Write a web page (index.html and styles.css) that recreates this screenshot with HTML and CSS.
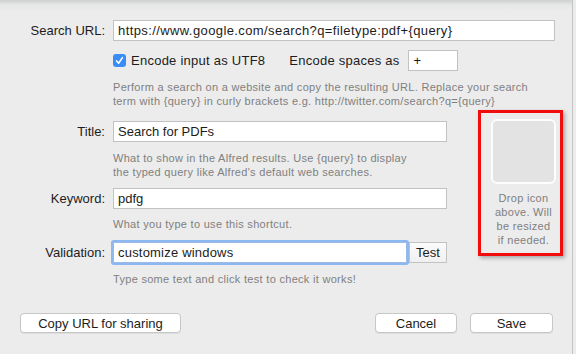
FILE: index.html
```html
<!DOCTYPE html>
<html lang="en">
<head>
    <meta charset="UTF-8">
    <meta name="viewport" content="width=device-width, initial-scale=1.0">
    <title>Custom Search</title>
    <link rel="stylesheet" href="styles.css">
</head>
<body>
    <div class="window">
        <div class="row url-row">
            <label class="label">Search URL:</label>
            <div class="field url-field">https://www.google.com/search?q=filetype:pdf+{query}</div>
        </div>
        <div class="row options-row">
            <span class="check">
                <svg width="13" height="13" viewBox="0 0 13 13"><rect width="13" height="13" rx="3" fill="#3a8df4"/><path d="M3.6 6.9 L5.6 9.2 L9.4 3.6" fill="none" stroke="#fff" stroke-width="1.6" stroke-linecap="round" stroke-linejoin="round"/></svg>
            </span>
            <span class="check-label">Encode input as UTF8</span>
            <span class="spaces-label">Encode spaces as</span>
            <div class="field spaces-field">+</div>
        </div>
        <p class="help top-help">Perform a search on a website and copy the resulting URL. Replace your search<br>term with {query} in curly brackets e.g. http://twitter.com/search?q={query}</p>

        <div class="middle">
            <div class="fields">
                <div class="row">
                    <label class="label">Title:</label>
                    <div class="field wide">Search for PDFs</div>
                </div>
                <p class="help title-help">What to show in the Alfred results. Use {query} to display<br>the typed query like Alfred's default web searches.</p>
                <div class="row">
                    <label class="label">Keyword:</label>
                    <div class="field wide">pdfg</div>
                </div>
                <p class="help keyword-help">What you type to use this shortcut.</p>
                <div class="row">
                    <label class="label">Validation:</label>
                    <div class="field focused">customize windows</div>
                    <button class="test-button">Test</button>
                </div>
                <p class="help">Type some text and click test to check it works!</p>
            </div>
            <div class="icon-box">
                <div class="icon-well"></div>
                <p class="icon-text">Drop icon<br>above. Will<br>be resized<br>if needed.</p>
            </div>
        </div>

        <div class="footer">
            <button class="button share">Copy URL for sharing</button>
            <div class="footer-right">
                <button class="button cancel">Cancel</button>
                <button class="button save">Save</button>
            </div>
        </div>
    </div>
</body>
</html>
```

FILE: styles.css
```css
body {
    margin: 0;
    font-family: "Liberation Sans", Arial, sans-serif;
    font-size: 13px;
    color: #1c1c1c;
    background-color: #ececec;
}

.window {
    width: 573px;
    height: 354px;
    box-sizing: border-box;
    padding-top: 20px;
    border-right: 1px solid #c4c4c4;
    background: linear-gradient(#cfcfcf, #e6e8e8 5px, #ececec 12px);
    overflow: hidden;
}

.row {
    display: flex;
    align-items: center;
    height: 21px;
}

.label {
    width: 105px;
    text-align: right;
    margin-right: 8px;
    flex-shrink: 0;
}

.field {
    height: 21px;
    box-sizing: border-box;
    border: 1px solid #c2c2c2;
    background-color: #fff;
    padding: 0 4px;
    line-height: 19px;
    white-space: nowrap;
}

.url-field {
    width: 442px;
    letter-spacing: 0.4px;
}

.options-row {
    margin-top: 9px;
    padding-left: 113px;
    letter-spacing: 0.25px;
}

.check {
    width: 13px;
    height: 13px;
    display: flex;
}

.check-label {
    margin-left: 5px;
}

.spaces-label {
    margin-left: 24px;
}

.spaces-field {
    width: 50px;
    margin-left: 8px;
    padding-left: 5px;
}

.help {
    margin: 9px 0 0 113px;
    font-size: 11px;
    line-height: 14px;
    color: #808080;
    letter-spacing: 0.3px;
}

.middle {
    display: flex;
    margin-top: 2px;
}

.fields {
    width: 447px;
    padding-top: 11px;
}

.wide {
    width: 334px;
}

.title-help {
    margin-bottom: 9px;
}

.keyword-help {
    margin-top: 8px;
    margin-bottom: 11px;
}

.focused {
    width: 294px;
    border-color: #9bbbe6;
    box-shadow: 0 0 0 2px #8db7f1;
    border-radius: 1px;
    letter-spacing: 0.2px;
}

.test-button {
    height: 21px;
    width: 38px;
    margin-left: 2px;
    border: 1px solid #c2c2c2;
    background: linear-gradient(#fbfbfb, #f0f0f0);
    font-family: inherit;
    font-size: 13px;
    color: #1c1c1c;
    padding: 0;
}

.icon-box {
    width: 85px;
    height: 146px;
    box-sizing: border-box;
    margin-left: 31px;
    border: 3px solid #f20d0d;
    padding: 6px 4px 0 10px;
    box-shadow: 2px 2px 4px rgba(0, 0, 0, 0.3);
}

.icon-well {
    width: 65px;
    height: 65px;
    box-sizing: border-box;
    border: 2px solid #fdfdfd;
    border-radius: 6px;
    background-color: #e3e3e3;
}

.icon-text {
    margin: 7px 0 0;
    width: 65px;
    text-align: center;
    font-size: 11px;
    line-height: 14px;
    color: #808080;
    letter-spacing: 0.3px;
}

.footer {
    display: flex;
    justify-content: space-between;
    margin-top: 27px;
    padding: 0 19px 0 20px;
}

.footer-right {
    display: flex;
    gap: 13px;
}

.button {
    height: 20px;
    box-sizing: border-box;
    border: 1px solid #c6c6c6;
    border-radius: 4px;
    background-color: #fff;
    box-shadow: 0 1px 0 rgba(0, 0, 0, 0.06);
    font-family: inherit;
    font-size: 13px;
    color: #1c1c1c;
    padding: 0;
}

.share {
    width: 161px;
}

.cancel {
    width: 82px;
}

.save {
    width: 83px;
}
```
